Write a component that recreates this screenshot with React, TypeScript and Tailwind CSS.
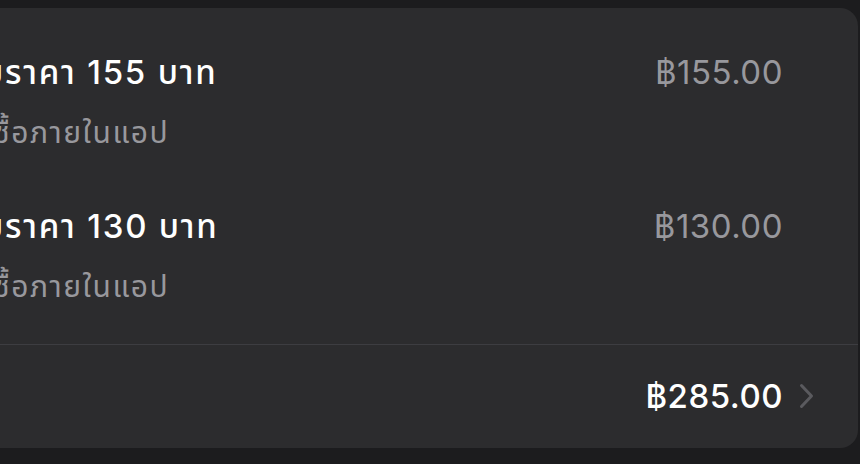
import React from 'react';

const font = { fontFamily: '"Inter", "Noto Sans Thai", "Noto Sans", "DejaVu Sans", sans-serif' };

interface Item {
  name: string;
  kind: string;
  price: string;
}

const items: Item[] = [
  { name: 'ราคา 155 บาท', kind: 'ภายในแอป', price: '฿155.00' },
  { name: 'ราคา 130 บาท', kind: 'ภายในแอป', price: '฿130.00' },
];

const Row: React.FC<{ item: Item }> = ({ item }) => (
  <div className="flex items-start justify-between pr-[75px]">
    <div className="flex flex-col whitespace-nowrap">
      <div className="text-[33px] leading-[40px] font-medium tracking-[1.8px] text-white">
        <span className="inline-block w-[200px] -ml-[200px] text-right">ระดับ</span>
        {item.name}
      </div>
      <div className="mt-[22px] ml-[25px] text-[30px] leading-[36px] tracking-[1.5px] text-[#98989d]">
        <span className="inline-block w-[200px] -ml-[200px] text-right">การซื้อ</span>
        {item.kind}
      </div>
    </div>
    <div className="text-[33px] leading-[40px] tracking-[0.5px] text-[#98989d]">{item.price}</div>
  </div>
);

export default function App() {
  return (
    <div className="w-[860px] h-[464px] overflow-hidden bg-[#1c1c1e] pt-2" style={font}>
      <div className="-ml-[40px] w-[898px] h-[440px] rounded-[18px] bg-[#2c2c2e] flex flex-col">
        <div className="pl-[45px] pt-[44px] flex flex-col gap-[56px]">
          {items.map((it, i) => (
            <Row key={i} item={it} />
          ))}
        </div>
        <div className="mt-[40px] h-px bg-[#3d3d41]" />
        <div className="flex items-center justify-end pr-[44px] pt-[31px]">
          <span className="text-[33px] leading-[40px] font-medium tracking-[0.5px] text-white">฿285.00</span>
          <svg className="ml-[16px]" width="15" height="26" viewBox="0 0 15 26" fill="none">
            <path d="M2.5 2.5 L12.5 13 L2.5 23.5" stroke="#5a5a5e" strokeWidth="3" strokeLinecap="round" strokeLinejoin="round" />
          </svg>
        </div>
      </div>
    </div>
  );
}
